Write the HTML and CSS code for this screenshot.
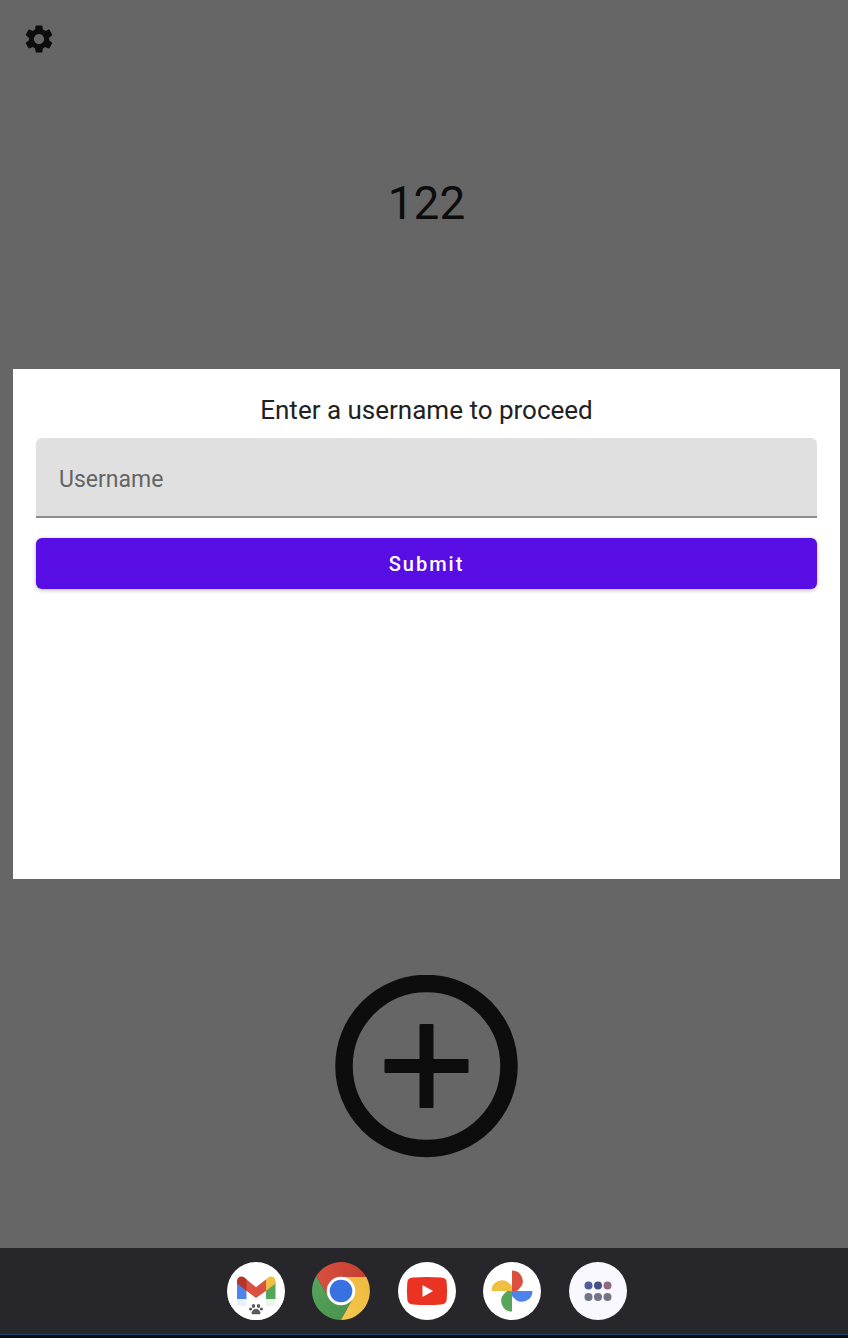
FILE: index.html
```html
<!DOCTYPE html>
<html lang="en">
<head>
<meta charset="utf-8">
<meta name="viewport" content="width=device-width, initial-scale=1">
<title>Counter</title>
<link rel="stylesheet" href="styles.css">
</head>
<body>
<main class="app">
  <header class="toolbar">
    <button class="icon-button" type="button" aria-label="Settings">
      <svg class="gear" viewBox="0 0 24 24" aria-hidden="true"><path d="M19.14 12.94c.04-.3.06-.61.06-.94 0-.32-.02-.64-.07-.94l2.03-1.58c.18-.14.23-.41.12-.61l-1.92-3.32c-.12-.22-.37-.29-.59-.22l-2.39.96c-.5-.38-1.03-.7-1.62-.94l-.36-2.54c-.04-.24-.24-.41-.48-.41h-3.84c-.24 0-.43.17-.47.41l-.36 2.54c-.59.24-1.13.57-1.62.94l-2.39-.96c-.22-.08-.47 0-.59.22L2.74 8.87c-.12.21-.08.47.12.61l2.03 1.58c-.05.3-.09.63-.09.94s.02.64.07.94l-2.03 1.58c-.18.14-.23.41-.12.61l1.92 3.32c.12.22.37.29.59.22l2.39-.96c.5.38 1.03.7 1.62.94l.36 2.54c.05.24.24.41.48.41h3.84c.24 0 .44-.17.47-.41l.36-2.54c.59-.24 1.13-.56 1.62-.94l2.39.96c.22.08.47 0 .59-.22l1.92-3.32c.12-.22.07-.47-.12-.61l-2.01-1.58zM12 15.6c-1.98 0-3.6-1.62-3.6-3.6s1.62-3.6 3.6-3.6 3.6 1.62 3.6 3.6-1.62 3.6-3.6 3.6z"/></svg>
    </button>
  </header>
  <p class="count">122</p>
  <form class="dialog" role="dialog" aria-labelledby="dialog-title">
    <h1 class="dialog-title" id="dialog-title">Enter a username to proceed</h1>
    <input class="field" type="text" name="username" placeholder="Username" aria-label="Username">
    <button class="submit" type="submit">Submit</button>
  </form>
  <button class="add" type="button" aria-label="Add">
    <svg class="add-icon" viewBox="0 0 183 183" aria-hidden="true">
      <circle cx="91.5" cy="91" r="82.5" fill="none" stroke="#0d0d0d" stroke-width="17.5"/>
      <rect x="49.5" y="84" width="84" height="14" rx="1"/>
      <rect x="84.500" y="49" width="14" height="84" rx="1"/>
    </svg>
  </button>
</main>
<nav class="dock" aria-label="Apps">
  <div class="dock-apps">
    <button class="dock-app" type="button" aria-label="Gmail">
      <svg viewBox="0 0 58 58" aria-hidden="true">
        <circle cx="29" cy="29" r="29" fill="#fff"/>
        <path d="M10 20v21q0 3 3 3h6.500V24z" fill="#4f83ec"/>
        <path d="M39 24v20h6.500q3 0 3-3V20z" fill="#57a55b"/>
        <path d="M39.500 17L29 25.200 19 17v11.500L29 36l10.500-7.500z" fill="#da5140"/>
        <path d="M10 19v2.500l9.500 7.200V17.300l-2.200-1.800C14 13 10 15.500 10 19z" fill="#b5342b"/>
        <path d="M48.500 19v2.500L39 28.700V17.300l2.200-1.800c3.300-2.500 7.300 0 7.300 3.500z" fill="#f1bf42"/>
        <path d="M1.100 37h55.800A29 29 0 0 1 1.100 37z" fill="#fff" fill-opacity=".88"/>
        <g fill="#595d61"><ellipse cx="26.500" cy="44" rx="1.700" ry="2"/><ellipse cx="31.500" cy="44" rx="1.700" ry="2"/><circle cx="23.600" cy="47" r="1.600"/><circle cx="34.400" cy="47" r="1.600"/><path d="M29 46.800c2 0 2.700 1.200 3.800 2.500 1.500 1.800.5 3.200-1.200 3q-2.600-.3-5.200 0c-1.700.2-2.700-1.200-1.200-3 1.100-1.300 1.800-2.500 3.800-2.500z"/></g>
      </svg>
    </button>
    <button class="dock-app" type="button" aria-label="Chrome">
      <svg viewBox="0 0 58 58" aria-hidden="true">
        <defs>
          <linearGradient id="red" x1="0" x2="1"><stop offset="0" stop-color="#d85040"/><stop offset="1" stop-color="#c53f31"/></linearGradient>
          <linearGradient id="green" x1="0" x2="1" y2="1"><stop offset="0" stop-color="#58a55c"/><stop offset="1" stop-color="#47914c"/></linearGradient>
          <linearGradient id="yellow" x1="1" x2="0" y2="1"><stop offset="0" stop-color="#efb93d"/><stop offset="1" stop-color="#f4c84f"/></linearGradient>
        </defs>
        <path d="M29 15h25.300A29 29 0 0 0 4.200 14L17 36z" fill="url(#red)"/>
        <path d="M4.200 14A29 29 0 0 0 29 58L41 36 17 36z" fill="url(#green)"/>
        <path d="M29 58A29 29 0 0 0 54.300 15H29L41 36z" fill="url(#yellow)"/>
        <circle cx="29" cy="29" r="14.300" fill="#fff"/>
        <circle cx="29" cy="29" r="11.300" fill="#3871e0"/>
      </svg>
    </button>
    <button class="dock-app" type="button" aria-label="YouTube">
      <svg viewBox="0 0 58 58" aria-hidden="true">
        <circle cx="29" cy="29" r="29" fill="#fff"/>
        <path d="M15 15.600q14-1 28 0c4 .3 5.300 1.600 5.700 5.400q.8 8 0 16c-.4 3.800-1.700 5.100-5.700 5.400q-14 1-28 0c-4-.3-5.300-1.600-5.700-5.400q-.8-8 0-16c.4-3.800 1.700-5.100 5.700-5.400z" fill="#ea3323"/>
        <path d="M24.500 23v12L35 29z" fill="#fff"/>
      </svg>
    </button>
    <button class="dock-app" type="button" aria-label="Photos">
      <svg viewBox="0 0 58 58" aria-hidden="true">
        <circle cx="29" cy="29" r="29" fill="#fff"/>
        <path d="M29 8.500a10.500 10.500 0 0 1 7 18.500q-1 1.500-2.500 2H29z" fill="#da5140"/>
        <path d="M49.500 29A10.500 10.500 0 0 1 31 36q-1.500-1-2-2.500V29z" fill="#4f83ec"/>
        <path d="M29 49.500A10.500 10.500 0 0 1 22 31q1-1.500 2.500-2H29z" fill="#57a55b"/>
        <path d="M8.500 29A10.500 10.500 0 0 1 27 22q1.500 1 2 2.500V29z" fill="#f1bf42"/>
      </svg>
    </button>
    <button class="dock-app" type="button" aria-label="All apps">
      <svg viewBox="0 0 58 58" aria-hidden="true">
        <circle cx="29" cy="29" r="29" fill="#f9f7ff"/>
        <circle cx="19.500" cy="23.500" r="4" fill="#525b94"/><circle cx="29" cy="23.500" r="4" fill="#484f86"/><circle cx="38.500" cy="23.500" r="4" fill="#8c6a84"/>
        <g fill="#717485"><circle cx="19.500" cy="35" r="4"/><circle cx="29" cy="35" r="4"/><circle cx="38.500" cy="35" r="4"/></g>
      </svg>
    </button>
  </div>
</nav>
</body>
</html>
```
FILE: styles.css
```css
* { box-sizing: border-box; }

body {
  margin: 0;
  min-height: 100vh;
  display: flex;
  flex-direction: column;
  background: #666;
  color: #0d0d0d;
  font-family: Roboto, sans-serif;
}

button {
  border: 0;
  padding: 0;
  background: none;
  font-family: inherit;
  cursor: pointer;
}

svg { display: block; }

.app {
  flex: 1;
  display: flex;
  flex-direction: column;
  align-items: center;
  padding: 22px 8px 90px 13px;
}

.toolbar {
  align-self: stretch;
  display: flex;
  padding-left: 9px;
}

.gear {
  width: 34px;
  height: 34px;
  fill: #0d0d0d;
}

.count {
  margin: 120px 0 139px;
  font-size: 46px;
  line-height: 54px;
}

.dialog {
  align-self: stretch;
  min-height: 510px;
  padding: 23px;
  display: flex;
  flex-direction: column;
  background: #fff;
}

.dialog-title {
  margin: 0 0 10px;
  color: #212121;
  font-size: 26px;
  font-weight: 400;
  line-height: 36px;
  text-align: center;
}

.field {
  width: 100%;
  height: 80px;
  padding: 4px 23px 0;
  border: 0;
  border-bottom: 2px solid #8d8d8d;
  border-radius: 6px 6px 0 0;
  outline: 0;
  background: #e0e0e0;
  color: #212121;
  font-family: inherit;
  font-size: 23px;
}

.field::placeholder {
  color: #646464;
  opacity: 1;
}

.submit {
  height: 51px;
  margin-top: 20px;
  border-radius: 6px;
  background: #570de3;
  box-shadow: 0 1px 4px rgba(0, 0, 0, 0.3);
  color: #fff;
  font-size: 20px;
  font-weight: 500;
  letter-spacing: 2px;
}

.add {
  width: 183px;
  margin-top: 96px;
}

.add-icon { fill: #0d0d0d; }

.dock {
  height: 90px;
  padding: 14px 0 0 5px;
  display: flex;
  justify-content: center;
  align-items: flex-start;
  background: linear-gradient(#26262b 86px, #174868 86px, #174868 87px, #0b0c10 87px);
}

.dock-apps {
  width: 400px;
  display: flex;
  justify-content: space-between;
}

.dock-app {
  width: 58px;
  height: 58px;
}
```
